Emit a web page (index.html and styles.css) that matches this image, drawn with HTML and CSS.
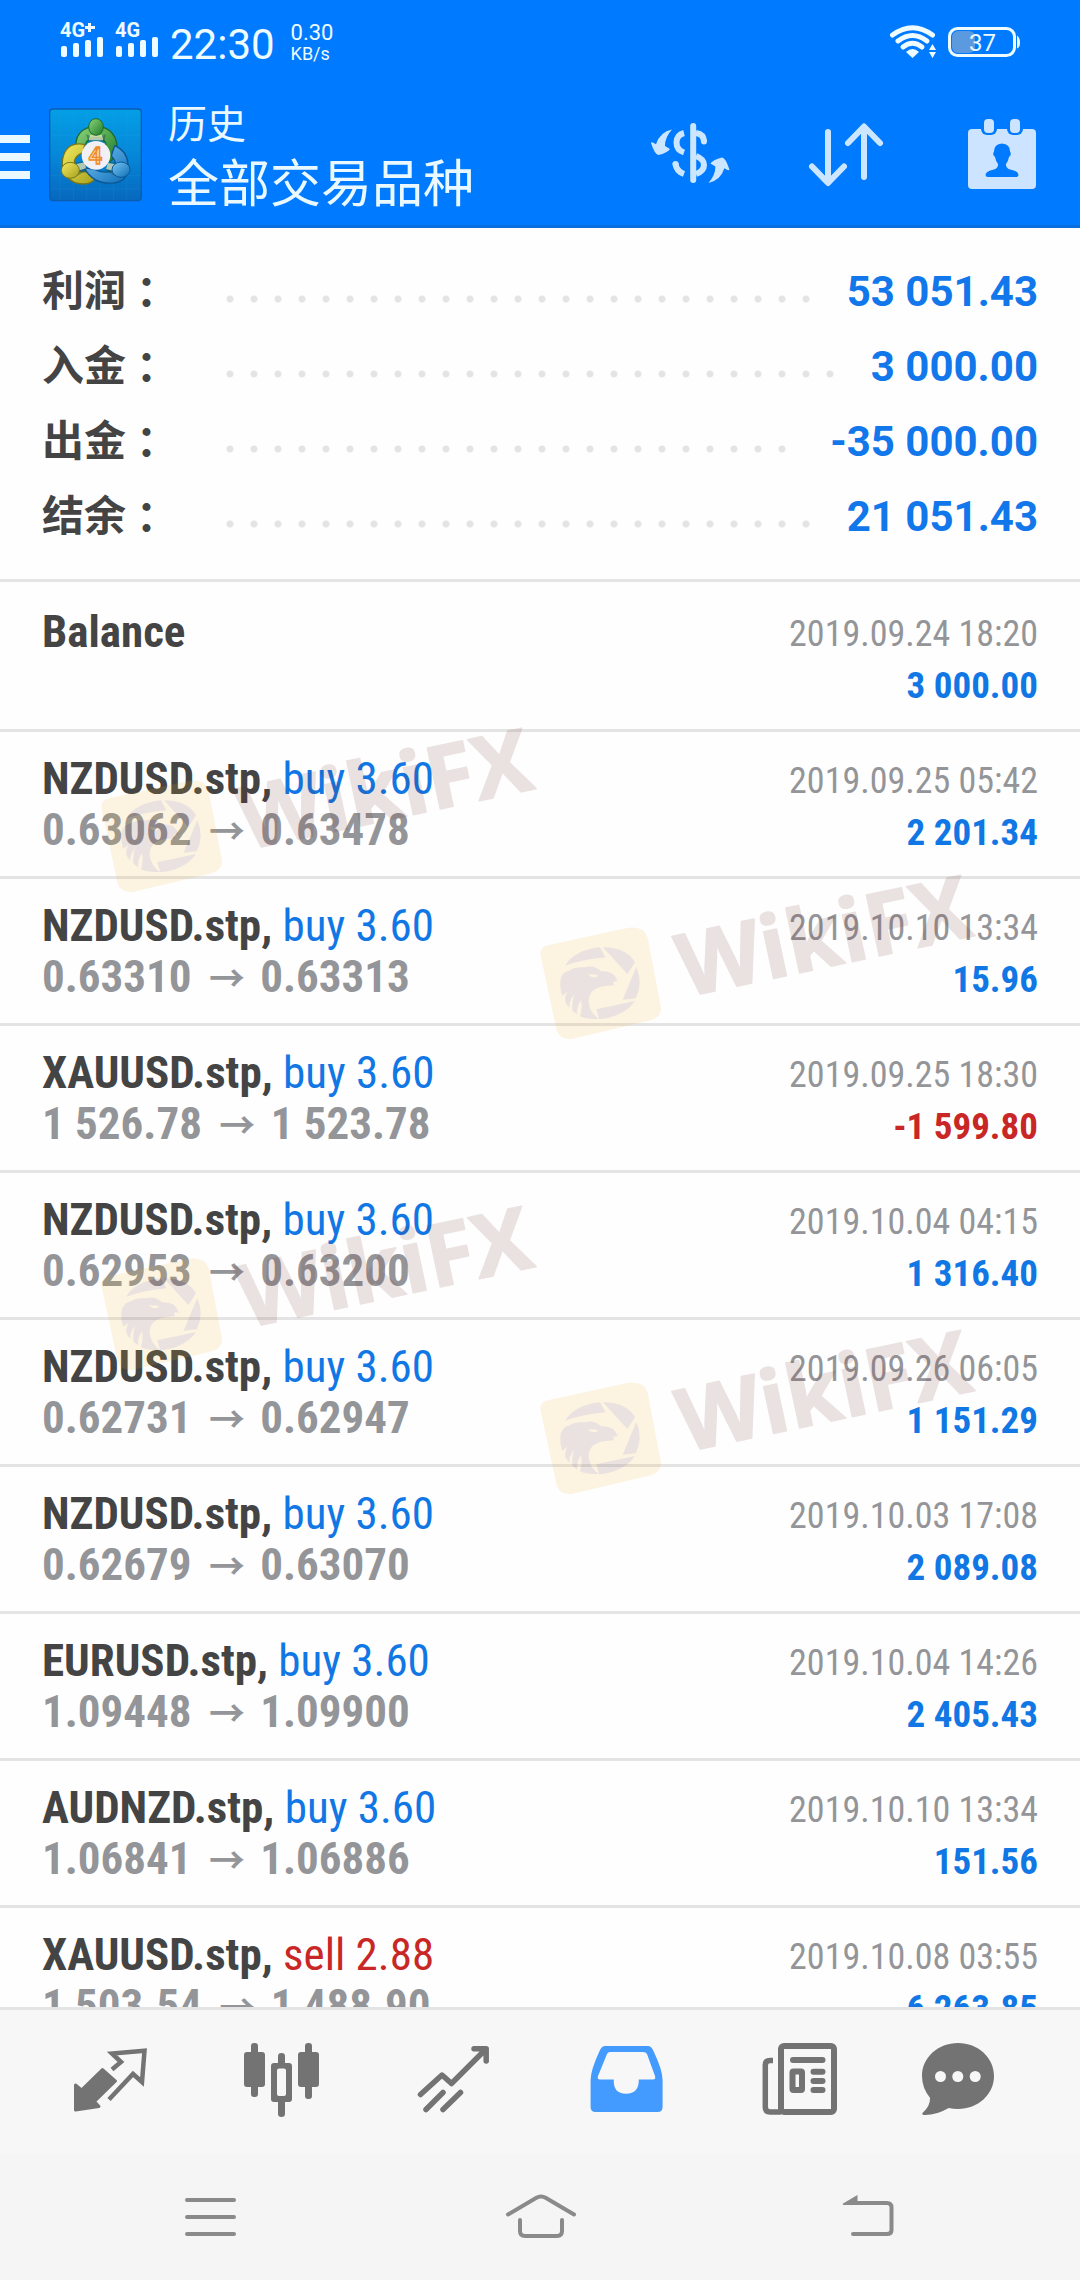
FILE: index.html
```html
<!DOCTYPE html>
<html lang="zh-CN">
<head>
<meta charset="utf-8">
<meta name="viewport" content="width=device-width, initial-scale=1">
<title>历史 - 全部交易品种</title>
<link rel="stylesheet" href="styles.css">
</head>
<body>
<svg class="defs" width="0" height="0" aria-hidden="true">
  <symbol id="watermark" viewBox="48 81 1332 507">
    <path fill="#f2af28" d="M62 332Q58 307 84 301L322 249Q372 242 383 278L423 488Q424 515 395 525L158 581Q120 586 110 556Z"/>
    <g fill="#6e2828">
      <path d="M135 362Q165 315 240 307L256 337Q190 343 135 362Z"/>
      <path d="M249 307Q320 308 345 352L322 387Z"/>
      <path d="M349 366Q370 415 347 460L308 464Z"/>
      <path d="M229 493L345 468Q312 515 238 523Z"/>
      <path fill-rule="evenodd" d="M121 412Q122 382 150 376Q160 366 195 367Q222 359 243 379Q284 376 293 410Q286 407 278 411Q283 415 281 421L255 423Q204 430 206 472Q210 505 237 522Q200 524 180 514Q188 490 183 465Q168 488 172 508L158 498Q154 480 162 450Q146 468 148 488Q140 480 136 470Q134 455 142 440L127 452Q119 432 121 412ZM202 388Q214 398 226 397L235 392Q228 387 202 388Z"/>
      <text class="watermark-text" x="494" y="457" transform="rotate(-12 494 457)">WikiFX</text>
    </g>
  </symbol>
  <linearGradient id="tile" x1="0" y1="0" x2="0" y2="1"><stop offset="0" stop-color="#049fe6"/><stop offset=".5" stop-color="#0587d8"/><stop offset="1" stop-color="#0768bd"/></linearGradient>
  <linearGradient id="green" x1="0" y1="0" x2="1" y2="1"><stop offset="0" stop-color="#8fd67c"/><stop offset="1" stop-color="#1c7a28"/></linearGradient>
  <linearGradient id="yellow" x1="0" y1="0" x2="1" y2="1"><stop offset="0" stop-color="#f5ea5e"/><stop offset="1" stop-color="#a5a01c"/></linearGradient>
  <linearGradient id="blue" x1="0" y1="0" x2="1" y2="1"><stop offset="0" stop-color="#7cc8f2"/><stop offset="1" stop-color="#0c6cb8"/></linearGradient>
</svg>

<div class="app">
  <div class="status">
    <svg width="55" height="84" viewBox="60 0 55 84" fill="#eefcff" aria-label="4G+">
      <text class="net" x="60" y="37">4G</text><path d="M85 26h10v3H85zM88 23h3v9h-3z"/>
      <rect x="61" y="46" width="6" height="11" rx="2"/><rect x="73" y="43" width="6" height="14" rx="2"/><rect x="85" y="40" width="6" height="17" rx="2"/><rect x="97" y="37" width="6" height="20" rx="2"/>
    </svg>
    <svg width="55" height="84" viewBox="115 0 55 84" fill="#eefcff" aria-label="4G">
      <text class="net" x="115" y="37">4G</text>
      <rect x="116" y="46" width="6" height="11" rx="2"/><rect x="128" y="43" width="6" height="14" rx="2"/><rect x="140" y="40" width="6" height="17" rx="2"/><rect x="152" y="37" width="6" height="20" rx="2"/>
    </svg>
    <time class="clock">22:30</time>
    <p class="speed"><span class="rate">0.30</span><span>KB/s</span></p>
    <svg class="power" width="132" height="84" viewBox="888 0 132 84" fill="none" stroke="#eefcff" aria-label="37%">
      <g stroke-width="5" stroke-linecap="round"><path d="M892.500 35Q912.500 20.500 932.500 35"/><path d="M898 41Q912.500 30 927 41"/><path d="M903 47Q912.500 39.500 922 47"/></g>
      <path fill="#eefcff" stroke="none" d="M906 52Q912.500 46 919 52L912.500 58ZM929 50l3.500-6 3.500 6zM929 52h7l-3.500 6z"/>
      <rect x="952" y="31" width="23" height="22" rx="6" fill="#5c9ae0" stroke="none"/>
      <rect x="949.500" y="28.500" width="65" height="27" rx="8" stroke-width="3"/>
      <path fill="#eefcff" stroke="none" d="M1017 35.500q3 2 3 7t-3 6z"/>
      <text class="level" x="969" y="51" fill="#eefcff" stroke="none">37</text>
    </svg>
  </div>

  <header class="appbar">
    <button class="menu" aria-label="菜单"><svg width="30" height="112" viewBox="0 0 30 112" fill="#e9f9ff"><path d="M0 36h30v8H0zM0 54h30v8H0zM0 72h30v8H0z"/></svg></button>
    <svg class="logo" width="112" height="112" viewBox="0 0 336 336" aria-hidden="true">
      <rect x="29" y="30" width="275" height="275" rx="10" fill="url(#tile)" stroke="#0b5cae" stroke-width="4"/>
      <path d="M60 32V303M100 32V303M140 32V303M180 32V303M220 32V303M260 32V303M31 70H302M31 110H302M31 150H302M31 190H302M31 230H302M31 270H302" stroke="#4cb8f0" stroke-opacity=".16" stroke-width="2"/>
      <g stroke-linejoin="round">
        <path d="M113 160C95 110 130 82 168 82C208 82 238 112 229 160Q222 182 208 188L196 152Q206 120 168 116Q132 120 138 146Q124 148 113 160Z" fill="url(#green)" stroke="#1b6b2a" stroke-width="4"/>
        <path d="M134 136Q78 126 68 180Q60 232 108 252Q150 262 166 238L146 216Q116 226 104 200Q98 172 130 160Z" fill="url(#yellow)" stroke="#77761c" stroke-width="4"/>
        <path d="M224 140Q262 156 264 196Q270 244 222 252Q160 258 132 206L166 212Q196 226 220 214Q236 196 214 170Z" fill="url(#blue)" stroke="#0b5796" stroke-width="4"/>
        <path d="M138 106Q168 122 198 106L192 130H146ZM84 196L132 186L140 214L112 230ZM250 196L208 188L196 214L224 230Z" fill="#174f44" fill-opacity=".45"/>
        <path d="M150 108H186L190 124H146ZM106 196L134 190L138 208L112 216ZM228 196L204 192L198 210L222 216Z" fill="#f4f1c8" fill-opacity=".7"/>
        <ellipse cx="168" cy="84" rx="22" ry="25" fill="url(#green)" stroke="#1b6b2a" stroke-width="3"/>
        <ellipse cx="91" cy="214" rx="27" ry="24" fill="url(#yellow)" stroke="#77761c" stroke-width="3"/>
        <ellipse cx="243" cy="212" rx="27" ry="23" fill="url(#blue)" stroke="#0b5796" stroke-width="3"/>
      </g>
      <circle cx="168" cy="169" r="43" fill="#f1f1f5"/>
      <text class="logo-digit" x="166" y="196" text-anchor="middle">4</text>
    </svg>
    <div class="heading">
      <p class="section">历史</p>
      <h1 class="filter">全部交易品种</h1>
    </div>
    <div class="actions">
      <button aria-label="货币"><svg width="96" height="96" viewBox="0 0 96 96" fill="none" stroke="#cce6ff" stroke-width="6" stroke-linecap="round">
        <path id="swoosh" fill="#cce6ff" stroke="none" d="M30 22.600Q23 30 23 39L28 42Q25 46 16.500 48Q13 48 9 36Q9 34 14 37.300Q18 25 30 22.600Z"/>
        <use href="#swoosh" transform="rotate(180 48.200 49.300)"/>
        <path d="M51.200 19V73"/><path stroke-linecap="butt" d="M42 26Q34.500 28 34.500 35.500T42 45.500M54 26Q62 27 62 35M54 49Q62 52 62 58T54 67M33.500 56Q34 64 42 67"/>
        <path d="M62 34v.5M33.500 57v.2"/>
      </svg></button>
      <button aria-label="排序"><svg width="96" height="96" viewBox="0 0 96 96" fill="none" stroke="#cce6ff" stroke-width="6" stroke-linecap="round" stroke-linejoin="round"><path d="M30 25V75M14 59.500L30 76L46 59.500M66 70V20M50 36L66 19.500L82 36"/></svg></button>
      <button aria-label="日期"><svg width="96" height="96" viewBox="0 0 96 96"><rect x="14" y="22" width="68" height="60" rx="4" fill="#cce4ff"/><rect x="27" y="9" width="16" height="19" rx="6" fill="#007aff"/><rect x="53" y="9" width="16" height="19" rx="6" fill="#007aff"/><g fill="#cce4ff"><rect x="30" y="12" width="10" height="14" rx="4"/><rect x="56" y="12" width="10" height="14" rx="4"/></g><path fill="#007aff" d="M48 36.500Q56 37 56 44.500Q58 48 55 50Q54 55 52 57Q51.500 61 56 62.500Q64.500 64 64.500 68Q64.500 70 62 70H34Q31.500 70 31.500 68Q31.500 64 40 62.500Q44.500 61 44 57Q42 55 41 50Q38 48 40 44.500Q40 37 48 36.500Z"/></svg></button>
    </div>
  </header>

  <dl class="summary">
    <div><dt>利润<span class="colon">：</span></dt><dd>53 051.43</dd></div>
    <div><dt>入金<span class="colon">：</span></dt><dd>3 000.00</dd></div>
    <div><dt>出金<span class="colon">：</span></dt><dd>-35 000.00</dd></div>
    <div><dt>结余<span class="colon">：</span></dt><dd>21 051.43</dd></div>
  </dl>

  <main class="history">
    <ul class="deals">
      <li><div class="deal"><p><b>Balance</b></p></div><div class="result"><time>2019.09.24 18:20</time><b>3 000.00</b></div></li>
      <li><div class="deal"><p><b>NZDUSD.stp,</b> <span class="buy">buy 3.60</span></p><p class="price">0.63062 <span class="to">→</span> 0.63478</p></div><div class="result"><time>2019.09.25 05:42</time><b>2 201.34</b></div></li>
      <li><div class="deal"><p><b>NZDUSD.stp,</b> <span class="buy">buy 3.60</span></p><p class="price">0.63310 <span class="to">→</span> 0.63313</p></div><div class="result"><time>2019.10.10 13:34</time><b>15.96</b></div></li>
      <li><div class="deal"><p><b>XAUUSD.stp,</b> <span class="buy">buy 3.60</span></p><p class="price">1 526.78 <span class="to">→</span> 1 523.78</p></div><div class="result"><time>2019.09.25 18:30</time><b class="loss">-1 599.80</b></div></li>
      <li><div class="deal"><p><b>NZDUSD.stp,</b> <span class="buy">buy 3.60</span></p><p class="price">0.62953 <span class="to">→</span> 0.63200</p></div><div class="result"><time>2019.10.04 04:15</time><b>1 316.40</b></div></li>
      <li><div class="deal"><p><b>NZDUSD.stp,</b> <span class="buy">buy 3.60</span></p><p class="price">0.62731 <span class="to">→</span> 0.62947</p></div><div class="result"><time>2019.09.26 06:05</time><b>1 151.29</b></div></li>
      <li><div class="deal"><p><b>NZDUSD.stp,</b> <span class="buy">buy 3.60</span></p><p class="price">0.62679 <span class="to">→</span> 0.63070</p></div><div class="result"><time>2019.10.03 17:08</time><b>2 089.08</b></div></li>
      <li><div class="deal"><p><b>EURUSD.stp,</b> <span class="buy">buy 3.60</span></p><p class="price">1.09448 <span class="to">→</span> 1.09900</p></div><div class="result"><time>2019.10.04 14:26</time><b>2 405.43</b></div></li>
      <li><div class="deal"><p><b>AUDNZD.stp,</b> <span class="buy">buy 3.60</span></p><p class="price">1.06841 <span class="to">→</span> 1.06886</p></div><div class="result"><time>2019.10.10 13:34</time><b>151.56</b></div></li>
      <li><div class="deal"><p><b>XAUUSD.stp,</b> <span class="sell">sell 2.88</span></p><p class="price">1 503.54 <span class="to">→</span> 1 488.90</p></div><div class="result"><time>2019.10.08 03:55</time><b>6 263.85</b></div></li>
    </ul>
  </main>

  <nav class="tabs">
    <button aria-label="行情"><svg width="96" height="96" viewBox="0 0 96 96" fill="#737373"><path stroke="#737373" stroke-width="3" stroke-linejoin="round" d="M13.500 51L19.500 56L40.500 35.500L53.500 47L32.500 67.500L37 72.500L13.500 76Z"/><path fill="none" stroke="#737373" stroke-width="4.500" d="M50 35.500L59 28L50 19.500L82.500 16.700L80 48L71 40L47 65.500"/></svg></button>
    <button aria-label="图表"><svg width="96" height="96" viewBox="0 0 96 96" fill="#737373"><rect x="10" y="18" width="21" height="35" rx="3"/><rect x="17" y="9" width="7" height="54" rx="3"/><path fill-rule="evenodd" d="M40 29H55Q58 29 58 32V65Q58 68 55 68H40Q37 68 37 65V32Q37 29 40 29ZM45 34.500Q43 34.500 43 36.500V60Q43 62 45 62H50Q52 62 52 60V36.500Q52 34.500 50 34.500Z"/><path d="M44 30V22Q44 19 47.500 19T51 22V30ZM44 66V80Q44 83 47.500 83T51 80V66Z"/><rect x="64" y="18" width="21" height="35" rx="3"/><rect x="71" y="9" width="7" height="56" rx="3"/></svg></button>
    <button aria-label="交易"><svg width="96" height="96" viewBox="0 0 96 96" fill="none" stroke="#737373" stroke-width="5.500" stroke-linecap="round" stroke-linejoin="round"><path d="M14.500 60.500L36 41L45.500 49.500L79.500 15.500M68 14.800H80.200V27"/><path d="M20 75.500L37 58.500M37 75.500L54.500 58.500"/></svg></button>
    <button aria-label="历史" aria-current="page"><svg width="96" height="96" viewBox="0 0 96 96" fill="#449bff"><path fill-rule="evenodd" d="M27 12H70Q73 12 75 16Q84.600 36 84.600 46V73Q84.600 78 79.600 78H17.600Q12.600 78 12.600 73V46Q12.600 36 22 16Q24 12 27 12ZM32 18Q30 18 29 20L20 42Q19 45.500 22 45.500H35.800Q35 59.700 48 59.700T60.800 45.500H75Q78 45.500 77 42L69 20Q68 18 65 18Z"/></svg></button>
    <button aria-label="新闻"><svg width="96" height="96" viewBox="0 0 96 96" fill="none" stroke="#737373" stroke-width="6"><rect x="31" y="12" width="53" height="66" rx="3"/><path stroke-width="5.500" d="M23 26.500H20Q15.300 26.500 15.300 31V73Q15.300 78 20 78H31"/><path stroke-linecap="round" d="M43 26H72.500M63.500 37.700H72.500M63.500 47H72.500M63.500 56H72.500"/><rect x="42.500" y="37.500" width="9.500" height="18.500" rx="1"/></svg></button>
    <button aria-label="消息"><svg width="96" height="96" viewBox="0 0 96 96" fill="#737373"><path d="M36 9C56 9 72 23.500 72 42S56 75 36 75Q31 75 26.700 74Q14 81.500 1.500 81Q-1 80 1.500 78Q8 72 8.100 64Q0 54 0 42C0 23.500 16 9 36 9Z"/><g fill="#f7f7f7"><circle cx="18.500" cy="42.500" r="5.500"/><circle cx="35.800" cy="42.500" r="5.500"/><circle cx="53.200" cy="42.500" r="5.500"/></g></svg></button>
  </nav>

  <nav class="system">
    <button aria-label="最近"><svg width="72" height="48" viewBox="0 0 72 48"><path d="M13 7H60M13 24H60M13 41H60"/></svg></button>
    <button aria-label="主页"><svg width="72" height="48" viewBox="0 0 72 48"><path d="M4 21.500L32 5Q37 2 42 5L70 21.500M16 27V38Q16 43 21 43H53Q58 43 58 38V27"/></svg></button>
    <button aria-label="返回"><svg width="72" height="48" viewBox="0 0 72 48"><path d="M16 10H53Q57.500 10 57.500 14.500V37Q57.500 41 53 41H19"/><path class="tip" d="M9 10.500L23.500 2V12H11Q8 12 9 10.500Z"/></svg></button>
  </nav>

  <div class="watermarks" aria-hidden="true">
    <svg class="mark mark-a"><use href="#watermark"/></svg>
    <svg class="mark mark-b"><use href="#watermark"/></svg>
    <svg class="mark mark-c"><use href="#watermark"/></svg>
    <svg class="mark mark-d"><use href="#watermark"/></svg>
  </div>
</div>
</body>
</html>
```
FILE: styles.css
```css
* {
  box-sizing: border-box;
}

body,
p,
h1,
ul,
dl,
dd {
  margin: 0;
  padding: 0;
}

body {
  background: #fefefe;
  color: #444;
  font-family: Roboto, "Noto Sans CJK SC", sans-serif;
}

svg {
  display: block;
  flex: none;
}

button {
  display: flex;
  align-items: center;
  justify-content: center;
  padding: 0;
  border: 0;
  background: none;
}

.defs {
  position: absolute;
}

.app {
  position: relative;
  display: flex;
  flex-direction: column;
  height: 100vh;
  overflow: hidden;
}

/* Status bar */
.status {
  flex: none;
  display: flex;
  align-items: center;
  height: 84px;
  padding: 0 60px;
  background: #007aff;
  color: #eefcff;
}

.net {
  font-size: 20px;
  font-weight: 700;
}

.clock {
  padding-top: 6px;
  font-size: 42px;
  line-height: 48px;
}

.speed {
  display: flex;
  flex-direction: column;
  padding: 2px 0 0 16px;
  font-size: 18px;
  line-height: 20px;
}

.rate {
  font-size: 22px;
  line-height: 22px;
}

.power {
  margin-left: auto;
}

.level {
  font-size: 24px;
}

/* App bar */
.appbar {
  flex: none;
  display: flex;
  align-items: center;
  height: 144px;
  border-bottom: 3px solid #0a6edc;
  background: #007aff;
  color: #e9f9ff;
}

.logo {
  margin: 0 16px 0 10px;
}

.logo-digit {
  fill: #fbd9a8;
  stroke: #f08a24;
  stroke-width: 4px;
  font-size: 72px;
  font-weight: 700;
}

.section,
.filter {
  font-weight: 400;
  line-height: 60px;
}

.section {
  font-size: 39px;
}

.filter {
  font-size: 51px;
}

.actions {
  display: flex;
  margin-left: auto;
}

.actions button {
  width: 156px;
  height: 141px;
}

/* Account summary */
.summary {
  flex: none;
  padding: 25px 42px 26px;
  border-bottom: 3px solid #e4e4e4;
  font-size: 42px;
  line-height: 77px;
}

.summary div {
  display: flex;
  height: 75px;
}

.summary dt {
  flex: none;
  width: 176px;
  font-weight: 700;
}

.colon {
  padding-left: 10px;
}

.summary div::after {
  content: "";
  flex: 1;
  order: 1;
  margin-right: 34px;
  background: radial-gradient(circle at 12px 46px, #e4e4e4 3px, transparent 4px) 0 0 / 24px 75px repeat-x;
}

.summary dd {
  order: 2;
  color: #1177ea;
  font-weight: 700;
}

/* Deals */
.history {
  flex: 1;
  min-height: 0;
  overflow: hidden;
  padding-top: 3px;
  font-family: "Roboto Condensed", Roboto, sans-serif;
  font-size: 45px;
  line-height: 51px;
}

.deals {
  list-style: none;
}

.deals li {
  display: flex;
  justify-content: space-between;
  height: 147px;
  padding: 21px 42px 0;
  border-bottom: 3px solid #e4e4e4;
}

.buy {
  color: #1177e4;
}

.sell,
.result .loss {
  color: #c92626;
}

.price {
  color: #949599;
  font-weight: 700;
}

.to {
  margin: 0 5px 0 7px;
  font-family: "Noto Sans CJK SC", sans-serif;
  font-size: 36px;
  font-weight: 700;
  line-height: 1;
}

.result {
  display: flex;
  flex-direction: column;
  align-items: flex-end;
  padding-top: 3px;
  font-size: 36px;
}

.result time {
  color: #949599;
}

.result b {
  color: #1177e4;
  font-size: 37px;
}

/* Bottom tabs */
.tabs {
  flex: none;
  display: flex;
  padding: 0 24px;
  border-top: 3px solid #e4e4e4;
  background: #f7f7f7;
}

.tabs button {
  flex: 1;
  height: 144px;
}

/* System navigation */
.system {
  flex: none;
  display: flex;
  padding: 0 45px;
  background: #f5f5f5;
}

.system button {
  flex: 1;
  height: 126px;
}

.system path {
  fill: none;
  stroke: #8a8a8a;
  stroke-width: 4px;
  stroke-linecap: round;
}

.system .tip {
  fill: #8a8a8a;
  stroke: none;
}

/* Watermarks lie over the list */
.watermarks {
  position: absolute;
  inset: 0;
  pointer-events: none;
}

.mark {
  position: absolute;
  width: 444px;
  height: 169px;
  opacity: .13;
}

.mark-a {
  left: 97px;
  top: 725px;
}

.mark-b {
  left: 536px;
  top: 872px;
}

.mark-c {
  left: 97px;
  top: 1203px;
}

.mark-d {
  left: 536px;
  top: 1327px;
}

.watermark-text {
  stroke: #6e2828;
  stroke-width: 5px;
  stroke-linejoin: round;
  font-family: "Open Sans", sans-serif;
  font-size: 261px;
  font-weight: 700;
}
```
